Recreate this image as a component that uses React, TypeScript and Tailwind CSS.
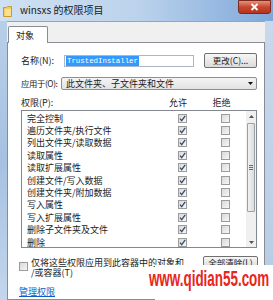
import React from 'react';

const perms = [
  '完全控制',
  '遍历文件夹/执行文件',
  '列出文件夹/读取数据',
  '读取属性',
  '读取扩展属性',
  '创建文件/写入数据',
  '创建文件夹/附加数据',
  '写入属性',
  '写入扩展属性',
  '删除子文件夹及文件',
  '删除',
];

const Box: React.FC<{ checked?: boolean }> = ({ checked }) => (
  <span className="w-[9px] h-[9px] border border-[#9c9c9c] bg-gradient-to-br from-[#d9d9d9] to-[#f7f7f7] flex items-center justify-center">
    {checked && (
      <svg width="7" height="7" viewBox="0 0 7 7">
        <path d="M1 3.6 L2.7 5.6 L6.2 0.9" stroke="#3a4a6e" strokeWidth="1.3" fill="none" />
      </svg>
    )}
  </span>
);

const App: React.FC = () => {
  return (
    <div className="w-[273px] h-[300px] relative overflow-hidden flex flex-col bg-[#b3cbe6] font-['Noto_Sans_CJK_SC',sans-serif] text-[9px] leading-none text-[#1b1b1b]">
      {/* Title bar */}
      <div className="h-[21px] flex items-start bg-gradient-to-r from-[#cfe0f2] via-[#bcd3ec] to-[#7fa8d9]">
        <svg width="9" height="11" viewBox="0 0 9 11" className="ml-[3px] mt-[6px]">
          <path d="M0.5 1.5 H3.5 L4.5 0.5 H8.5 V10.5 H0.5 Z" fill="#f2cc5e" stroke="#c99a2e" />
          <path d="M2 3 H8 V10 H2 Z" fill="#f9e08f" />
        </svg>
        <span className="ml-[8px] mt-[5px] text-[10px] text-[#1a1a1a]">winsxs 的权限项目</span>
        <div className="ml-auto mr-[2px] w-[33px] h-[14px] rounded-b-[3px] border border-[#7a2a1c] bg-gradient-to-b from-[#e6907b] via-[#c7472f] to-[#b8321c] flex items-center justify-center">
          <svg width="9" height="8" viewBox="0 0 9 8">
            <path d="M1.5 1 L7.5 7 M7.5 1 L1.5 7" stroke="#ffffff" strokeWidth="1.8" />
          </svg>
        </div>
      </div>

      {/* Body */}
      <div className="flex-1 flex">
        <div className="w-[7px] bg-gradient-to-b from-[#b8cfe8] via-[#a6c1e1] to-[#c3d6ec]" />
        <div className="w-[258px] bg-[#f0f0f0] border-t border-[#8ea6c4] pt-[3px] flex flex-col">
          {/* Tab strip */}
          <div className="h-[17px] flex items-end">
            <div className="w-[40px] h-[17px] ml-[1px] bg-white border border-b-0 border-[#898c95] rounded-t-[2px] flex items-center pl-[7px] relative z-10 -mb-px">
              对象
            </div>
          </div>
          {/* Tab panel */}
          <div className="flex-1 bg-white border border-[#898c95] pt-[10px] pl-[13px] pr-[7px] flex flex-col">
            {/* Name row */}
            <div className="h-[15px] flex items-center">
              <span className="w-[43px] whitespace-nowrap">名称(N):</span>
              <div className="w-[130px] h-[12px] border border-[#a9b7c8] bg-white flex items-center pl-px">
                <span className="bg-[#3399ff] text-white font-['Liberation_Mono',monospace] text-[7.4px] px-[1px] leading-[10px]">TrustedInstaller</span>
              </div>
              <div className="ml-auto w-[53px] h-[15px] rounded-[2px] border border-[#707070] bg-gradient-to-b from-[#f6f6f6] to-[#dcdcdc] flex items-center justify-center text-[8.5px]">
                更改(C)...
              </div>
            </div>
            {/* Apply to row */}
            <div className="h-[13px] mt-[9px] flex items-center">
              <span className="w-[40px] whitespace-nowrap text-[8.4px] tracking-[-0.4px]">应用于(O):</span>
              <div className="flex-1 h-[13px] border border-[#8e8f8f] rounded-[2px] bg-gradient-to-b from-[#f4f4f4] to-[#e2e2e2] flex items-center pl-[4px] pr-[3px]">
                <span>此文件夹、子文件夹和文件</span>
                <svg width="5" height="3" viewBox="0 0 5 3" className="ml-auto">
                  <path d="M0 0 H5 L2.5 3 Z" fill="#111" />
                </svg>
              </div>
            </div>
            {/* Header row */}
            <div className="h-[12px] mt-[6px] grid grid-cols-[1fr_44px_42px_13px] items-center">
              <span>权限(P):</span>
              <span className="text-center pr-[4px]">允许</span>
              <span className="text-center pr-[3px]">拒绝</span>
              <span />
            </div>
            {/* List */}
            <div className="mt-[2px] h-[138px] border border-[#828790] flex">
              <div className="flex-1 pt-[1px]">
                {perms.map((p, i) => (
                  <div key={i} className="h-[12.4px] grid grid-cols-[1fr_44px_42px] items-center">
                    <span className="pl-[5px] whitespace-nowrap">{p}</span>
                    <span className="flex justify-center">
                      <Box checked />
                    </span>
                    <span className="flex justify-center">
                      <Box />
                    </span>
                  </div>
                ))}
              </div>
              {/* Scrollbar */}
              <div className="w-[10px] bg-[#f0f0f0] flex flex-col">
                <div className="h-[10px] flex items-center justify-center">
                  <svg width="5" height="3" viewBox="0 0 5 3">
                    <path d="M0 3 H5 L2.5 0 Z" fill="#555" />
                  </svg>
                </div>
                <div className="mt-[2px] h-[89px] mx-[1px] rounded-[1px] border border-[#9aa0a8] bg-gradient-to-r from-[#f2f2f2] to-[#dcdcdc] flex flex-col items-center justify-center gap-[1px]">
                  <span className="w-[4px] h-px bg-[#6b6b6b]" />
                  <span className="w-[4px] h-px bg-[#6b6b6b]" />
                  <span className="w-[4px] h-px bg-[#6b6b6b]" />
                </div>
                <div className="mt-auto h-[10px] flex items-center justify-center">
                  <svg width="5" height="3" viewBox="0 0 5 3">
                    <path d="M0 0 H5 L2.5 3 Z" fill="#555" />
                  </svg>
                </div>
              </div>
            </div>
            {/* Apply only checkbox */}
            <div className="mt-[8px] flex items-start -ml-[2px]">
              <span className="mt-[6px] w-[9px] h-[9px] border border-[#9c9c9c] bg-gradient-to-br from-[#d9d9d9] to-[#f7f7f7]" />
              <span className="ml-[3px] mt-[2px] flex flex-col whitespace-nowrap">
                <span className="h-[10px] leading-[10px]">仅将这些权限应用到此容器中的对象和</span>
                <span className="h-[10px] leading-[10px]">/或容器(T)</span>
              </span>
              <div className="ml-auto -mr-[1px] w-[55px] h-[12px] rounded-[2px] border border-[#707070] bg-gradient-to-b from-[#f6f6f6] to-[#dcdcdc] flex items-center justify-center text-[8.5px]">
                全部清除(L)
              </div>
            </div>
            {/* Link */}
            <div className="mt-[9px] -ml-[2px]">
              <span className="text-[#0b5ec8] underline">管理权限</span>
            </div>
          </div>
        </div>
        <div className="w-[8px] bg-gradient-to-b from-[#c9d9ec] to-[#b6cbe4]" />
      </div>

      {/* Watermark */}
      <div className="absolute left-[155px] top-[265px] w-[118px] h-[35px] bg-white">
        <span className="absolute right-[4px] top-[3px] origin-right scale-x-[0.61] whitespace-nowrap font-['Liberation_Sans',sans-serif] font-bold text-[22px] leading-none text-[#e8261c]">
          www.qidian55.com
        </span>
      </div>
    </div>
  );
};

export default App;
